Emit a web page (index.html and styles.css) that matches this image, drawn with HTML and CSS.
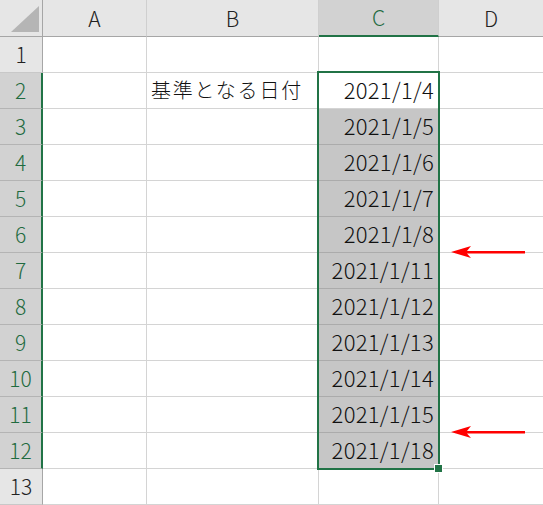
FILE: index.html
```html
<!DOCTYPE html>
<html lang="ja">
<head>
<meta charset="utf-8">
<link rel="stylesheet" href="styles.css">
</head>
<body>
<div class="sheet">
  <div class="grid">
    <div class="corner"><span class="tri"></span></div>
    <div class="ch">A</div>
    <div class="ch">B</div>
    <div class="ch sel">C</div>
    <div class="ch">D</div>

    <div class="rh">1</div><div class="c"></div><div class="c"></div><div class="c"></div><div class="c"></div>
    <div class="rh sel">2</div><div class="c"></div><div class="c txt">基準となる日付</div><div class="c num">2021/1/4</div><div class="c"></div>
    <div class="rh sel">3</div><div class="c"></div><div class="c"></div><div class="c num g">2021/1/5</div><div class="c"></div>
    <div class="rh sel">4</div><div class="c"></div><div class="c"></div><div class="c num g">2021/1/6</div><div class="c"></div>
    <div class="rh sel">5</div><div class="c"></div><div class="c"></div><div class="c num g">2021/1/7</div><div class="c"></div>
    <div class="rh sel">6</div><div class="c"></div><div class="c"></div><div class="c num g">2021/1/8</div><div class="c"></div>
    <div class="rh sel">7</div><div class="c"></div><div class="c"></div><div class="c num g">2021/1/11</div><div class="c"></div>
    <div class="rh sel">8</div><div class="c"></div><div class="c"></div><div class="c num g">2021/1/12</div><div class="c"></div>
    <div class="rh sel">9</div><div class="c"></div><div class="c"></div><div class="c num g">2021/1/13</div><div class="c"></div>
    <div class="rh sel">10</div><div class="c"></div><div class="c"></div><div class="c num g">2021/1/14</div><div class="c"></div>
    <div class="rh sel">11</div><div class="c"></div><div class="c"></div><div class="c num g">2021/1/15</div><div class="c"></div>
    <div class="rh sel">12</div><div class="c"></div><div class="c"></div><div class="c num g">2021/1/18</div><div class="c"></div>
    <div class="rh">13</div><div class="c"></div><div class="c"></div><div class="c"></div><div class="c"></div>
  </div>
  <div class="selbox"></div>
  <div class="handle"></div>
  <svg class="arrow a1" width="80" height="14" viewBox="0 0 80 14"><path d="M0 7 L20 1 L16 6 L74 6 L74 8.5 L16 8.5 L20 13 Z" fill="#ff0000"/></svg>
  <svg class="arrow a2" width="80" height="14" viewBox="0 0 80 14"><path d="M0 7 L20 1 L16 6 L74 6 L74 8.5 L16 8.5 L20 13 Z" fill="#ff0000"/></svg>
</div>
</body>
</html>
```

FILE: styles.css
```css
html, body {
  margin: 0;
  padding: 0;
  background: #ffffff;
}
.sheet {
  position: relative;
  width: 543px;
  height: 505px;
  overflow: hidden;
  font-family: "Noto Sans CJK JP", "Noto Sans", sans-serif;
}
.grid {
  display: grid;
  grid-template-columns: 43px 104px 172px 120px 105px;
  grid-template-rows: 37px repeat(13, 36px);
}
.grid > div {
  box-sizing: border-box;
  border-right: 1px solid #d4d4d4;
  border-bottom: 1px solid #d4d4d4;
}
.corner {
  position: relative;
  background: #e6e6e6;
  border-right: 1px solid #a6a6a6 !important;
  border-bottom: 1px solid #a6a6a6 !important;
}
.tri {
  position: absolute;
  right: 3px;
  bottom: 4px;
  width: 0;
  height: 0;
  border-left: 28px solid transparent;
  border-bottom: 26px solid #b5b5b5;
}
.ch {
  background: #e6e6e6;
  border-right: 1px solid #cfcfcf !important;
  border-bottom: 1px solid #a6a6a6 !important;
  display: flex;
  align-items: center;
  justify-content: center;
  font-size: 21px;
  font-weight: 300;
  color: #222;
  font-family: "Noto Sans CJK JP", "Noto Sans", sans-serif;
  padding-bottom: 1px;
}
.ch.sel {
  background: #d2d2d2;
  color: #1f6b3f;
  border-bottom: 2px solid #217346 !important;
}
.rh {
  background: #e6e6e6;
  border-right: 1px solid #a6a6a6 !important;
  border-bottom: 1px solid #c8c8c8 !important;
  display: flex;
  align-items: center;
  justify-content: center;
  font-size: 21px;
  font-weight: 300;
  color: #222;
  font-family: "Noto Sans CJK JP", "Noto Sans", sans-serif;
  padding-bottom: 2px;
}
.rh.sel {
  background: #d2d2d2;
  color: #1f6b3f;
  border-right: 2px solid #217346 !important;
  border-bottom-color: #b4b4b4 !important;
}
.c {
  background: #fff;
}
.txt {
  display: flex;
  align-items: center;
  padding-left: 4px;
  padding-bottom: 3px;
  font-size: 20px;
  font-weight: 300;
  color: #111;
  letter-spacing: 1.8px;
  white-space: nowrap;
}
.num {
  display: flex;
  align-items: center;
  justify-content: flex-end;
  padding-right: 4px;
  padding-bottom: 3px;
  font-size: 22px;
  font-weight: 300;
  letter-spacing: 0.3px;
  color: #111;
}
.g {
  background: #c6c6c6;
  border-bottom-color: #ababab !important;
}
.selbox {
  position: absolute;
  left: 317px;
  top: 71px;
  border: 2px solid #217346;
  box-sizing: border-box;
  width: 123px;
  height: 399px;
}
.handle {
  position: absolute;
  left: 435px;
  top: 465px;
  width: 7px;
  height: 7px;
  background: #217346;
  outline: 1px solid #fff;
}
.arrow {
  position: absolute;
  left: 451px;
}
.a1 { top: 245px; }
.a2 { top: 425px; }
```
